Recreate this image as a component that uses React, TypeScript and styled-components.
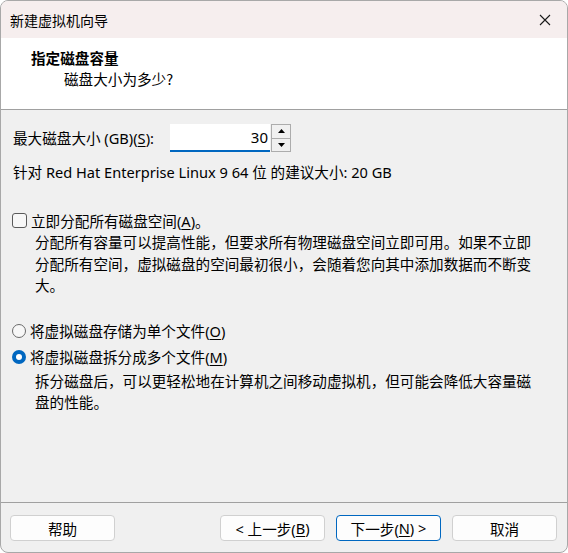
import React from 'react';
import styled, { createGlobalStyle } from 'styled-components';

const GlobalStyle = createGlobalStyle`
  html, body {
    margin: 0;
    padding: 0;
    background: #ffffff;
  }
  body {
    font-family: 'Noto Sans', 'Noto Sans CJK SC', sans-serif;
    color: #000;
  }
`;

// окно мастера
const Window = styled.div`
  width: 568px;
  height: 553px;
  box-sizing: border-box;
  border: 1px solid #a8a8a8;
  border-radius: 8px;
  overflow: hidden;
  display: flex;
  flex-direction: column;
  background: #f0f0f0;
`;

const TitleBar = styled.div`
  height: 37px;
  flex: none;
  display: flex;
  align-items: center;
  justify-content: space-between;
  padding: 0 14px 0 9px;
  background: #f6eeee;
`;

const TitleText = styled.span`
  font-size: 14px;
  font-family: 'Noto Sans CJK SC', sans-serif;
`;

const CloseButton = styled.button`
  border: none;
  background: transparent;
  padding: 0;
  width: 16px;
  height: 16px;
  display: flex;
  align-items: center;
  justify-content: center;
`;

//! Header (white)
const Header = styled.div`
  height: 72px;
  flex: none;
  background: #ffffff;
  border-bottom: 1px solid #a0a0a0;
  box-sizing: border-box;
  padding: 9px 0 0 30px;
  display: flex;
  flex-direction: column;
`;

const HeaderTitle = styled.div`
  font-size: 14.6px;
  font-weight: bold;
  line-height: 22px;
  font-family: 'Noto Sans CJK SC', sans-serif;
`;

const HeaderSub = styled.div`
  font-size: 14.6px;
  line-height: 20px;
  padding-left: 33px;
  font-family: 'Noto Sans CJK SC', sans-serif;
`;

//! Body
const Body = styled.div`
  flex: 1;
  padding: 14px 12px 0 11px;
  display: flex;
  flex-direction: column;
  font-size: 14.6px;
`;

const SizeRow = styled.div`
  display: flex;
  align-items: center;
  height: 28px;
`;

const Label = styled.span`
  line-height: 20px;
  width: 157px;
  flex: none;
  padding-left: 1px;
`;

const Input = styled.div`
  width: 100px;
  height: 28px;
  box-sizing: border-box;
  background: #ffffff;
  border-bottom: 2px solid #0067c0;
  display: flex;
  align-items: center;
  justify-content: flex-end;
  padding-right: 2px;
  font-size: 15px;
`;

const Spinner = styled.div`
  width: 20px;
  height: 28px;
  display: flex;
  flex-direction: column;
  margin-left: 1px;
  border: 1px solid #acacac;
  box-sizing: border-box;
  background: #acacac;
  gap: 1px;
`;

const SpinButton = styled.div`
  flex: 1;
  background: #f0f0f0;
  display: flex;
  align-items: center;
  justify-content: center;
`;

const InfoText = styled.div`
  line-height: 20px;
  margin-top: 10px;
  padding-left: 1px;
`;

const OptionRow = styled.label<{ $marginTop: number }>`
  display: flex;
  align-items: center;
  gap: 4px;
  height: 20px;
  margin-top: ${(props) => props.$marginTop}px;
`;

const CheckBox = styled.span`
  width: 13px;
  height: 13px;
  border: 1px solid #5a5a5a;
  border-radius: 3px;
  background: #f7f7f7;
  flex: none;
`;

const Radio = styled.span<{ $checked?: boolean }>`
  width: 14px;
  height: 14px;
  box-sizing: border-box;
  border-radius: 50%;
  flex: none;
  display: flex;
  align-items: center;
  justify-content: center;
  border: ${(props) => (props.$checked ? 'none' : '1px solid #6a6a6a')};
  background: ${(props) => (props.$checked ? '#0067c0' : '#f7f7f7')};
  &::after {
    content: '';
    display: ${(props) => (props.$checked ? 'block' : 'none')};
    width: 6px;
    height: 6px;
    border-radius: 50%;
    background: #ffffff;
  }
`;

const Description = styled.div<{ $marginTop: number }>`
  padding-left: 23px;
  line-height: 21.5px;
  margin-top: ${(props) => props.$marginTop}px;
`;

const Key = styled.span`
  text-decoration: underline;
  text-underline-offset: 2px;
`;

//! Footer
const Footer = styled.div`
  height: 50px;
  flex: none;
  border-top: 1px solid #a0a0a0;
  box-sizing: border-box;
  display: flex;
  justify-content: space-between;
  padding: 12px 10px 0 9px;
`;

const ButtonGroup = styled.div`
  display: flex;
  gap: 11px;
`;

const Button = styled.button<{ $isDefault?: boolean }>`
  width: 105px;
  height: 26px;
  box-sizing: border-box;
  background: #fdfdfd;
  border: 1px solid ${(props) => (props.$isDefault ? '#0067c0' : '#d0d0d0')};
  border-radius: 4px;
  font-family: 'Noto Sans', 'Noto Sans CJK SC', sans-serif;
  font-size: 14.6px;
  color: #000;
  padding: 0;
  display: flex;
  align-items: center;
  justify-content: center;
`;

const Arrow = ({ up }: { up?: boolean }) => (
  <svg width="7" height="4" viewBox="0 0 7 4">
    <polygon points={up ? '3.5,0 7,4 0,4' : '0,0 7,0 3.5,4'} fill="#000" />
  </svg>
);

export default function App() {
  return (
    <>
      <GlobalStyle />
      <Window>
        <TitleBar>
          <TitleText>新建虚拟机向导</TitleText>
          <CloseButton>
            <svg width="12" height="12" viewBox="0 0 12 12">
              <path d="M1 1 L11 11 M11 1 L1 11" stroke="#1a1a1a" strokeWidth="1.1" />
            </svg>
          </CloseButton>
        </TitleBar>
        <Header>
          <HeaderTitle>指定磁盘容量</HeaderTitle>
          <HeaderSub>磁盘大小为多少?</HeaderSub>
        </Header>
        <Body>
          <SizeRow>
            <Label>
              最大磁盘大小 (GB)(<Key>S</Key>):
            </Label>
            <Input>30</Input>
            <Spinner>
              <SpinButton>
                <Arrow up />
              </SpinButton>
              <SpinButton>
                <Arrow />
              </SpinButton>
            </Spinner>
          </SizeRow>
          <InfoText>针对 Red Hat Enterprise Linux 9 64 位 的建议大小: 20 GB</InfoText>

          <OptionRow $marginTop={28}>
            <CheckBox />
            <span>
              立即分配所有磁盘空间(<Key>A</Key>)。
            </span>
          </OptionRow>
          <Description $marginTop={2}>
            分配所有容量可以提高性能，但要求所有物理磁盘空间立即可用。如果不立即
            <br />
            分配所有空间，虚拟磁盘的空间最初很小，会随着您向其中添加数据而不断变
            <br />
            大。
          </Description>

          <OptionRow $marginTop={24}>
            <Radio />
            <span>
              将虚拟磁盘存储为单个文件(<Key>O</Key>)
            </span>
          </OptionRow>
          <OptionRow $marginTop={6}>
            <Radio $checked />
            <span>
              将虚拟磁盘拆分成多个文件(<Key>M</Key>)
            </span>
          </OptionRow>
          <Description $marginTop={4}>
            拆分磁盘后，可以更轻松地在计算机之间移动虚拟机，但可能会降低大容量磁
            <br />
            盘的性能。
          </Description>
        </Body>
        <Footer>
          <Button>帮助</Button>
          <ButtonGroup>
            <Button>
              &lt; 上一步(<Key>B</Key>)
            </Button>
            <Button $isDefault>
              下一步(<Key>N</Key>) &gt;
            </Button>
            <Button>取消</Button>
          </ButtonGroup>
        </Footer>
      </Window>
    </>
  );
}
